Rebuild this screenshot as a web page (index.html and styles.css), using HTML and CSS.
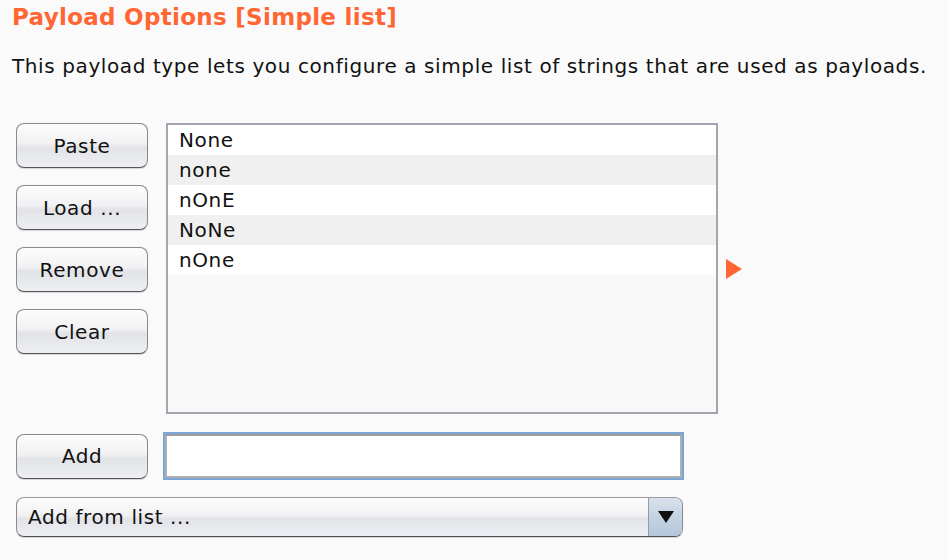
FILE: index.html
```html
<!DOCTYPE html>
<html>
<head>
<meta charset="utf-8">
<link rel="stylesheet" href="styles.css">
</head>
<body>
<div class="page">
  <h1 class="title">Payload Options [Simple list]</h1>
  <p class="desc">This payload type lets you configure a simple list of strings that are used as payloads.</p>
  <div class="list-area">
    <div class="btn-col">
      <button class="btn">Paste</button>
      <button class="btn">Load ...</button>
      <button class="btn">Remove</button>
      <button class="btn">Clear</button>
    </div>
    <div class="listbox">
      <div class="row">None</div>
      <div class="row alt">none</div>
      <div class="row">nOnE</div>
      <div class="row alt">NoNe</div>
      <div class="row">nOne</div>
    </div>
    <div class="arrow"></div>
  </div>
  <div class="add-row">
    <button class="btn">Add</button>
    <div class="field"><div class="field-inner"></div></div>
  </div>
  <div class="combo">
    <span class="combo-label">Add from list ...</span>
    <span class="combo-btn"><span class="tri-down"></span></span>
  </div>
</div>
</body>
</html>
```
FILE: styles.css
```css
html, body {
  margin: 0;
  padding: 0;
  background: #fafafa;
}
.page {
  width: 948px;
  height: 560px;
  box-sizing: border-box;
  padding: 3px 0 0 12px;
  font-family: "DejaVu Sans", "Liberation Sans", sans-serif;
  color: #111;
  overflow: hidden;
}
.title {
  margin: 0;
  font-size: 23px;
  font-weight: bold;
  letter-spacing: 0.3px;
  color: #ff6633;
  line-height: 28px;
}
.desc {
  margin: 22px 0 0 0;
  font-size: 20px;
  letter-spacing: 0.6px;
  line-height: 26px;
}
.list-area {
  display: flex;
  align-items: stretch;
  margin-top: 44px;
}
.btn-col {
  display: flex;
  flex-direction: column;
  gap: 17px;
  margin-left: 4px;
  width: 132px;
}
.btn {
  width: 132px;
  height: 45px;
  box-sizing: border-box;
  border: 1px solid #8a8a8e;
  border-bottom-color: #555559;
  border-radius: 8px;
  background: linear-gradient(#fdfdfd 0%, #f1f1f3 45%, #e2e3e7 55%, #eeeff3 100%);
  box-shadow: 0 1px 1px rgba(0,0,0,0.15);
  font-family: "DejaVu Sans", "Liberation Sans", sans-serif;
  font-size: 20px;
  letter-spacing: 0.6px;
  color: #111;
  padding: 0;
}
.listbox {
  margin-left: 18px;
  width: 552px;
  height: 291px;
  box-sizing: border-box;
  border: 2px solid #a3a4ad;
  background: #f8f8f8;
  font-size: 20px;
  letter-spacing: 0.6px;
}
.row {
  height: 30px;
  line-height: 30px;
  padding-left: 11px;
  background: #ffffff;
}
.row.alt {
  background: #f0f0f0;
}
.arrow {
  align-self: center;
  margin-left: 8px;
  width: 0;
  height: 0;
  border-top: 10px solid transparent;
  border-bottom: 10px solid transparent;
  border-left: 16px solid #ff6633;
}
.add-row {
  display: flex;
  align-items: center;
  margin-top: 18px;
  margin-left: 4px;
}
.field {
  margin-left: 15px;
  width: 521px;
  height: 48px;
  box-sizing: border-box;
  border: 2px solid #7aa6d4;
  background: #fff;
}
.field-inner {
  height: 100%;
  box-sizing: border-box;
  border: 2px solid #b0b0b0;
  border-top-color: #9c9c9c;
}
.combo {
  display: flex;
  margin-top: 17px;
  margin-left: 4px;
  width: 667px;
  height: 40px;
  box-sizing: border-box;
  border: 1px solid #8a8a8e;
  border-bottom-color: #4f4f55;
  border-top-color: #9a9a9e;
  border-radius: 8px;
  background: linear-gradient(#fdfdfd 0%, #f1f1f3 45%, #e2e3e7 55%, #eef0f5 100%);
  box-shadow: 0 1px 1px rgba(0,0,0,0.15);
  overflow: hidden;
}
.combo-label {
  flex: 1;
  font-size: 20px;
  letter-spacing: 0.6px;
  line-height: 38px;
  padding-left: 11px;
}
.combo-btn {
  width: 33px;
  border-left: 1px solid #8d9cad;
  background: linear-gradient(#d8e2ec 0%, #c4d3e2 50%, #b3c7da 100%);
  display: flex;
  align-items: center;
  justify-content: center;
}
.tri-down {
  width: 0;
  height: 0;
  border-left: 8px solid transparent;
  border-right: 8px solid transparent;
  border-top: 12px solid #111;
}
```
